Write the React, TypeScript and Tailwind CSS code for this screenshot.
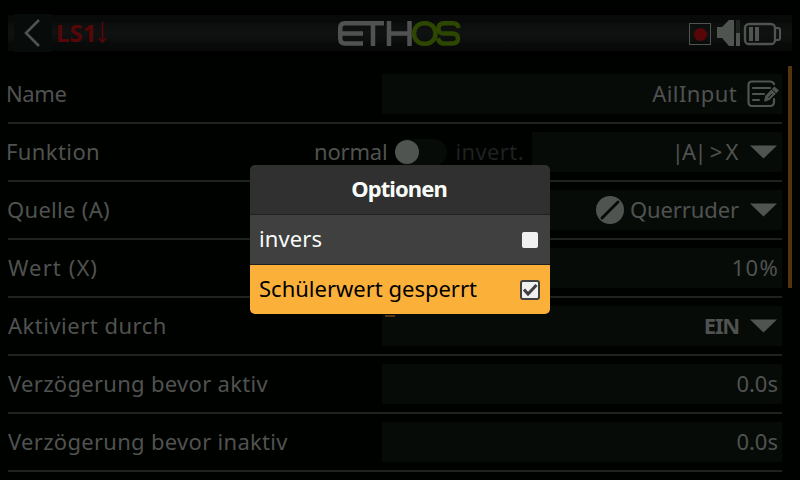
import React from "react";

const FONT = "font-['Noto_Sans','Open_Sans',sans-serif]";

function Row({ label, tracking, children }: { label: string; tracking: string; children: React.ReactNode }) {
  return (
    <div className="flex h-[58px] w-[774px] shrink-0 items-center justify-between border-b-2 border-[#1e2320]">
      <span className={`-mt-[3px] ${tracking}`}>{label}</span>
      {children}
    </div>
  );
}

function Field({ wide = true, children }: { wide?: boolean; children: React.ReactNode }) {
  return (
    <div className={`relative flex h-10 items-center justify-end bg-[#070b08] pr-1 ${wide ? "w-[400px]" : "w-[250px]"}`}>
      {children}
    </div>
  );
}

function Caret() {
  return (
    <svg className="ml-[12px] mr-px h-[14px] w-[27px]" viewBox="0 0 27 14">
      <path d="M0 0.5H27L13.5 13.5Z" fill="#505451" />
    </svg>
  );
}

function Note() {
  return (
    <svg className="-mr-px ml-[10px] h-[28px] w-[32px]" viewBox="0 0 32 28" fill="none" stroke="#505451" strokeWidth="2.200" strokeLinecap="round">
      <path d="M27 4Q26 1.500 23 1.500H5Q1.500 1.500 1.500 5V22Q1.500 26 5 26H23Q27 26 27 22V19" />
      <path d="M6 8H23M6 14H17M6 20H12" />
      <path d="M18 20.500L19 16L27.500 7.500L31 10.500L22 19.500L17.500 21Z" fill="#505451" strokeWidth="1.400" />
      <path d="M25 9.500L29 13.500" stroke="#060b08" strokeWidth="1" />
      <path d="M21.500 17.500L25 14" stroke="#060b08" strokeWidth="1" />
    </svg>
  );
}

function Logo() {
  return (
    <svg className="h-[27px] w-[126px]" viewBox="0 0 126 27" fill="none" strokeWidth="4.500">
      <g stroke="#505251">
        <path d="M47 3.250H8Q3.250 3.250 3.250 8V18.500Q3.250 23.500 8 23.500H26M3.250 13.500H26M36 3.250V26M52 1V26M52 13.500H72M72.500 1V26" />
      </g>
      <g stroke="#2d4600">
        <rect x="77" y="3.250" width="21.500" height="20.500" rx="10" />
        <path d="M121.500 8Q121 3.250 116 3.250H107Q101.500 3.250 101.500 8.500T107 13.500H115Q121 13.500 121 18.500T115 23.500H107Q102 23.500 101 18" />
      </g>
    </svg>
  );
}

export default function App() {
  return (
    <div className={`relative h-[480px] w-[800px] overflow-hidden bg-[#000200] text-[22px] leading-none text-[#505251] ${FONT}`}>
      <header className="ml-2 mt-2 flex h-[50px] w-[784px] bg-[linear-gradient(#000,#000_14%,#060907_14%,#080b09_30%,#0c0e0d_30%,#101211_50%,#0c0e0d_68%,#080b09_68%,#060907_86%,#000_86%)]">
        <div className="flex w-[330px] items-center">
          <div className="ml-[6px] flex h-[38px] w-[38px] items-center justify-center bg-[#070b09]">
            <svg className="-ml-[3px] h-[28px] w-[18px]" viewBox="0 0 18 28" fill="none" stroke="#505451" strokeWidth="2.600">
              <path d="M16 1L3 14L16 27" />
            </svg>
          </div>
          <span className="ml-[4px] text-[24px] font-bold tracking-[0px] text-[#580708]">LS1</span>
          <svg className="ml-[2px] -mt-[1px] h-[22px] w-[9px]" viewBox="0 0 9 22" fill="none" stroke="#580708" strokeWidth="1.600">
            <path d="M4.500 0V20M1 16L4.500 20L8 16" />
          </svg>
        </div>
        <div className="mt-[12px] -ml-[1px]">
          <Logo />
        </div>
        <svg className="ml-auto mr-[8px] mt-[11px] h-[28px] w-[96px]" viewBox="0 0 96 28">
          <rect x="1.500" y="4.500" width="21" height="21" fill="none" stroke="#505451" />
          <circle cx="12.500" cy="15.500" r="6.500" fill="#580708" />
          <path d="M29 8H34L41 1H46V27H41L34 19H29Z" fill="#505451" />
          <rect x="48" y="1" width="4" height="13" fill="#1e2320" />
          <rect x="48" y="14" width="4" height="13" fill="#505451" />
          <rect x="57" y="5" width="30" height="20" rx="4" fill="none" stroke="#505451" strokeWidth="2.300" />
          <path d="M88 9H90Q92 9 92 11V19Q92 21 90 21H88" fill="none" stroke="#505451" strokeWidth="2" />
          <path d="M61 8H65V22H61ZM67 8H71V22H67Z" fill="#505451" />
        </svg>
      </header>

      <main className="ml-2 mt-2 flex gap-[6px]">
        <div className="flex flex-col">
          <Row label="Name" tracking="-ml-[2px] tracking-[-0.4px]">
            <Field><span className="-mt-[3px] tracking-[0.4px]">AilInput</span><Note /></Field>
          </Row>
          <Row label="Funktion" tracking="-ml-[2px] tracking-[0.4px]">
            <div className="flex items-center">
              <span className="-mt-[3px] mr-[8px] tracking-[-0.2px]">normal</span>
              <div className="h-[27px] w-[52px] rounded-full bg-[#070b08] pt-[1px]">
                <div className="h-6 w-6 rounded-full bg-[#505451]" />
              </div>
              <span className="-mt-[3px] ml-[8px] mr-[8px] tracking-[0.4px] text-[#1e2120]">invert.</span>
              <Field wide={false}><span className="-mt-[3px] tracking-[-0.3px] [word-spacing:-2px]"><span className="tracking-[-2px]">|</span><span className="tracking-[-1.5px]">A</span>| &gt; X</span><Caret /></Field>
            </div>
          </Row>
          <Row label="Quelle (A)" tracking="-ml-px tracking-[0.3px]">
            <Field>
              <svg className="mr-[6px] h-7 w-7" viewBox="0 0 28 28">
                <circle cx="14" cy="14" r="14" fill="#505451" />
                <path d="M6 22L22 6" stroke="#060b08" strokeWidth="3" strokeLinecap="round" />
              </svg>
              <span className="-mt-[3px] -mr-px tracking-[-0.1px]">Querruder</span><Caret />
            </Field>
          </Row>
          <Row label="Wert (X)" tracking="tracking-[1.1px]">
            <Field><span className="-mt-[3px] -mr-px tracking-[1.3px]">10%</span></Field>
          </Row>
          <Row label="Aktiviert durch" tracking="tracking-[0.5px]">
            <Field>
              <div className="absolute left-[3px] top-[9px] h-[2px] w-[10px] bg-[#553510]" />
              <span className="-mt-[3px] -mr-px font-bold tracking-[-1.2px]">EIN</span><Caret />
            </Field>
          </Row>
          <Row label="Verzögerung bevor aktiv" tracking="tracking-[0.3px]">
            <Field><span className="-mt-[3px]">0.0s</span></Field>
          </Row>
          <Row label="Verzögerung bevor inaktiv" tracking="tracking-[0.3px]">
            <Field><span className="-mt-[3px]">0.0s</span></Field>
          </Row>
        </div>
        <div className="h-[222px] w-1 bg-[#553510]" />
      </main>

      <div role="dialog" className="absolute left-[250px] top-[165px] w-[300px] overflow-hidden rounded-[5px] text-[#f8fcf8]">
        <div className="flex h-[50px] items-center justify-center border-b border-[#202020] bg-[#303030]">
          <span className="-mt-[3px] -ml-[2px] text-[22px] font-bold tracking-[-0.9px]">Optionen</span>
        </div>
        <div className="flex h-[50px] items-center justify-between border-b border-[#202020] bg-[#404040] pl-[9px] pr-[12px]">
          <span className="-mt-[3px] tracking-[0.1px]">invers</span>
          <div className="h-4 w-4 rounded-[2px] bg-[#f0f0f0]" />
        </div>
        <div className="flex h-[49px] items-center justify-between bg-[#fab039] pl-[9px] pr-[10px] text-black">
          <span className="-mt-[3px] tracking-[0px]">Schülerwert gesperrt</span>
          <svg className="h-5 w-5" viewBox="0 0 20 20">
            <rect x="1" y="1" width="18" height="18" rx="2" fill="#f0f0f0" stroke="#404040" strokeWidth="2" />
            <path d="M4 9.500L8 14L16.500 5" fill="none" stroke="#404040" strokeWidth="3" />
          </svg>
        </div>
      </div>
    </div>
  );
}
